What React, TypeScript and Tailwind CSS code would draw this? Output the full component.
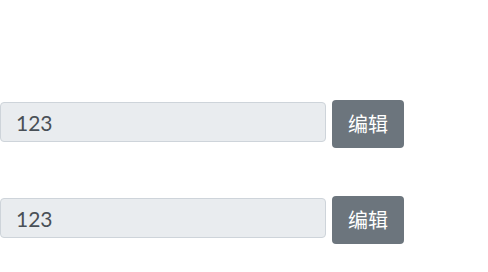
import React from 'react';

const rows = ['123', '123'];

const App: React.FC = () => {
  return (
    <div className="min-h-screen bg-white pt-[100px]">
      {rows.map((v, i) => (
        <div key={i} className={i > 0 ? 'mt-[48px] flex items-start gap-[6px]' : 'flex items-start gap-[6px]'}>
          <input
            readOnly
            value={v}
            className="mt-[2px] h-[40px] w-[326px] rounded-[4px] border border-[#ced4da] bg-[#e9ecef] px-[15px] font-['Lato','Noto_Sans_CJK_SC',sans-serif] text-[21px] text-[#495057] outline-none"
          />
          <button className="flex h-[48px] w-[72px] items-center justify-center rounded-[4px] bg-[#6c757d] font-['Noto_Sans_CJK_SC',sans-serif] text-[20px] text-white">
            编辑
          </button>
        </div>
      ))}
    </div>
  );
};

export default App;
